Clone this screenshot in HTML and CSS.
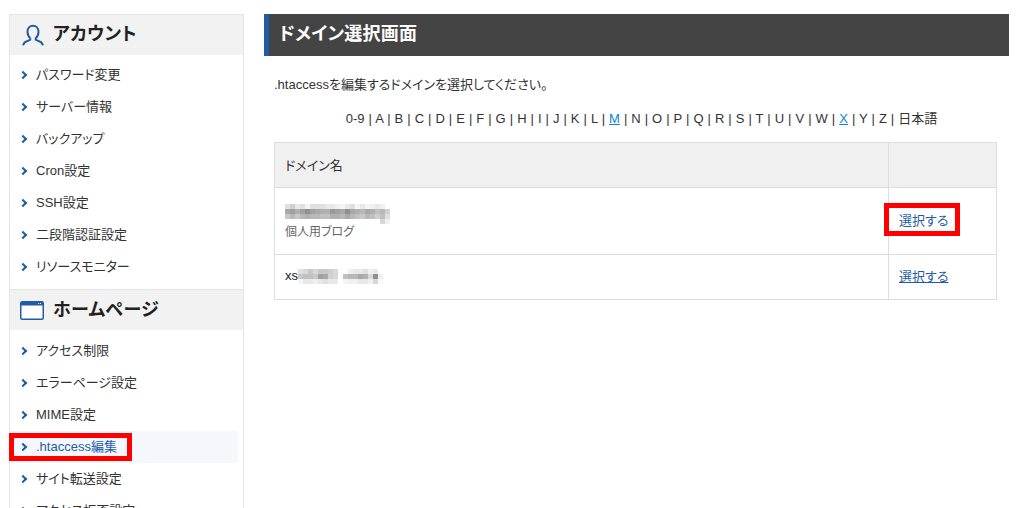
FILE: index.html
```html
<!DOCTYPE html>
<html lang="ja">
<head>
    <meta charset="UTF-8">
    <title>ドメイン選択画面</title>
    <link rel="stylesheet" href="styles.css">
</head>
<body>
    <div class="page">
        <div class="sidebar">
            <div class="side-head">
                <svg class="head-icon" width="22" height="22" viewBox="0 0 24 24" fill="none" stroke="#1f5ca8" stroke-width="2.200">
                    <path d="M9 15.500C6.800 13.500 6 11.300 6 8.500C6 4.500 8.500 2 12 2C15.500 2 18 4.500 18 8.500C18 11.300 17.200 13.500 15 15.500L15 17L21 20L23 23M9 15.500L9 17L3 20L1 23"/>
                </svg>
                <span>アカウント</span>
            </div>
            <ul class="side-list">
                <li>パスワード変更</li>
                <li>サーバー情報</li>
                <li>バックアップ</li>
                <li>Cron設定</li>
                <li>SSH設定</li>
                <li>二段階認証設定</li>
                <li>リソースモニター</li>
            </ul>
            <div class="side-head second">
                <svg class="head-icon" width="24" height="19" viewBox="0 0 24 19">
                    <rect x="0.750" y="0.750" width="22.500" height="17.500" rx="1.500" fill="#fff" stroke="#1f5ca8" stroke-width="1.500"/>
                    <rect x="1" y="1" width="22" height="3.500" fill="#1f5ca8"/>
                    <rect x="18" y="2" width="1" height="1" fill="#fff"/>
                    <rect x="20" y="2" width="1" height="1" fill="#fff"/>
                </svg>
                <span>ホームページ</span>
            </div>
            <ul class="side-list home-list">
                <li>アクセス制限</li>
                <li>エラーページ設定</li>
                <li>MIME設定</li>
                <li class="current">.htaccess編集<span class="mark mark-side"></span></li>
                <li>サイト転送設定</li>
                <li>アクセス拒否設定</li>
            </ul>
        </div>

        <div class="main">
            <h1 class="title">ドメイン選択画面</h1>
            <p class="lead">.htaccessを編集するドメインを選択してください。</p>
            <p class="index">0-9 | A | B | C | D | E | F | G | H | I | J | K | L | <a href="#">M</a> | N | O | P | Q | R | S | T | U | V | W | <a href="#">X</a> | Y | Z | 日本語</p>
            <table class="domains">
                <tr>
                    <th>ドメイン名</th>
                    <th class="action"></th>
                </tr>
                <tr class="row-first">
                    <td>
                        <div class="blur blur-one"></div>
                        <div class="note">個人用ブログ</div>
                    </td>
                    <td class="action"><span class="select">選択する<span class="mark mark-table"></span></span></td>
                </tr>
                <tr class="row-second">
                    <td><span class="host">xs</span><span class="blur blur-two"></span></td>
                    <td class="action"><a class="select" href="#">選択する</a></td>
                </tr>
            </table>
        </div>
    </div>
</body>
</html>
```

FILE: styles.css
```css
html, body {
    margin: 0;
    height: 508px;
    overflow: hidden;
}
body {
    font-family: "Liberation Sans", "Noto Sans CJK JP", sans-serif;
    font-feature-settings: "palt";
    font-size: 13px;
    color: #333;
    background: #fff;
}
.page {
    display: flex;
    align-items: flex-start;
    gap: 20px;
    padding: 14px 13px 0 9px;
}
.sidebar {
    width: 233px;
    flex-shrink: 0;
    border: 1px solid #e5e5e5;
}
.side-head {
    display: flex;
    align-items: center;
    height: 40px;
    padding-left: 12px;
    background: #f2f2f2;
    font-size: 18px;
    font-weight: bold;
    line-height: 36px;
    letter-spacing: 0.400px;
    color: #222;
}
.side-head span {
    margin-bottom: 3px;
}
.side-head.second {
    border-top: 1px solid #e5e5e5;
    padding-left: 10px;
}
.side-head.second span {
    margin-bottom: 1px;
}
.head-icon {
    margin-right: 9px;
}
.side-list {
    list-style: none;
    margin: 0;
    padding: 4px 5px 6px 0;
}
.home-list {
    padding-top: 5px;
}
.side-list li {
    position: relative;
    height: 32px;
    line-height: 32px;
    padding-left: 26px;
    color: #333;
}
.side-list li::before {
    content: "";
    position: absolute;
    left: 10px;
    top: 13px;
    width: 4px;
    height: 4px;
    border-top: 2px solid #1f5ca8;
    border-right: 2px solid #1f5ca8;
    transform: rotate(45deg);
}
.side-list li.current {
    background: #f4f8fd;
    color: #1f5ca8;
}
.mark {
    position: absolute;
    border: 5px solid #f00;
}
.mark-side {
    left: -1px;
    top: 2px;
    width: 113px;
    height: 18px;
}
.main {
    flex: 1;
}
.title {
    margin: 0;
    height: 42px;
    line-height: 41px;
    padding-left: 10px;
    background: #444;
    border-left: 5px solid #1f5ca8;
    color: #fff;
    font-size: 18px;
    font-weight: bold;
    letter-spacing: 0.200px;
}
.lead {
    margin: 21px 0 0 10px;
    line-height: 16px;
}
.index {
    margin: 18px 0 0 22px;
    width: 711px;
    line-height: 16px;
    text-align: center;
    word-spacing: 0.400px;
}
.index a {
    color: #0b85d1;
}
.domains {
    margin: 15px 0 0 10px;
    width: 723px;
    border-collapse: collapse;
    table-layout: fixed;
}
.domains th, .domains td {
    box-sizing: border-box;
    border: 1px solid #ddd;
    padding: 0 0 0 10px;
    text-align: left;
    font-weight: normal;
}
.domains th {
    height: 45px;
    padding-bottom: 2px;
    background: #f0f0f0;
}
.domains .action {
    width: 108px;
}
.row-first td {
    height: 67px;
    padding-top: 1px;
}
.row-second td {
    height: 45px;
    padding-bottom: 3px;
}
.domains .row-first .action {
    padding-bottom: 4px;
}
.note {
    line-height: 16px;
    font-size: 12px;
    color: #666;
}
.select {
    position: relative;
    color: #1f5ca8;
}
.mark-table {
    left: -15px;
    top: -10px;
    width: 66px;
    height: 23px;
}
.host {
    color: #222;
}
.blur {
    display: block;
    background-repeat: no-repeat;
}
.blur-one {
    width: 105px;
    height: 20px;
    background-image:
        linear-gradient(90deg, #e0e0e0 0 5px, #d0d0d0 5px 10px, #e8e8e8 10px 15px, #e0e0e0 15px 20px, #f5f5f5 20px 25px, #e0e0e0 25px 40px, #e8e8e8 40px 50px, #f0f0f0 50px 55px, #f5f5f5 55px 60px, #e8e8e8 60px 65px, #e0e0e0 65px 70px, #f5f5f5 70px 75px, #e8e8e8 75px 80px, #f5f5f5 80px 85px, #f0f0f0 85px 90px, #e8e8e8 90px 95px, #f0f0f0 95px 100px, #fff 100px 105px),
        linear-gradient(90deg, #a8a8a8 0 5px, #a0a0a0 5px 10px, #b0b0b0 10px 15px, #a0a0a0 15px 20px, #909090 20px 25px, #a0a0a0 25px 30px, #a8a8a8 30px 35px, #b0b0b0 35px 45px, #989898 45px 50px, #a0a0a0 50px 55px, #a8a8a8 55px 60px, #909090 60px 65px, #a8a8a8 65px 70px, #b0b0b0 70px 75px, #b8b8b8 75px 80px, #a8a8a8 80px 85px, #b0b0b0 85px 90px, #c0c0c0 90px 95px, #b8b8b8 95px 100px, #d0d0d0 100px 105px),
        linear-gradient(90deg, #c8c8c8 0 5px, #b8b8b8 5px 10px, #c8c8c8 10px 15px, #b8b8b8 15px 20px, #b0b0b0 20px 25px, #b8b8b8 25px 35px, #c0c0c0 35px 45px, #b0b0b0 45px 55px, #b8b8b8 55px 60px, #a8a8a8 60px 65px, #b8b8b8 65px 70px, #c0c0c0 70px 75px, #c8c8c8 75px 80px, #b8b8b8 80px 85px, #c0c0c0 85px 90px, #d0d0d0 90px 95px, #c0c0c0 95px 100px, #e0e0e0 100px 105px),
        linear-gradient(90deg, #d8d8d8 0 5px, #f0f0f0 5px 10px);
    background-size: 105px 5px, 105px 5px, 105px 5px, 10px 5px;
    background-position: 0 0, 0 5px, 0 10px, 95px 15px;
}
.blur-two {
    display: inline-block;
    vertical-align: -4px;
    width: 85px;
    height: 15px;
    background-image:
        linear-gradient(90deg, #e0e0e0 0 5px, #d8d8d8 5px 10px, #c8c8c8 10px 15px, #d8d8d8 15px 20px, #c8c8c8 20px 30px, #d0d0d0 30px 35px, #d8d8d8 35px 40px, #fff 40px 50px, #f0f0f0 50px 55px, #e8e8e8 55px 65px, #e0e0e0 65px 70px, #f0f0f0 70px 75px, #e8e8e8 75px 80px, #fff 80px 85px),
        linear-gradient(90deg, #c8c8c8 0 5px, #c0c0c0 5px 15px, #c8c8c8 15px 20px, #a0a0a0 20px 25px, #a8a8a8 25px 30px, #d0d0d0 30px 35px, #d8d8d8 35px 40px, #fff 40px 45px, #c0c0c0 45px 50px, #b8b8b8 50px 60px, #a8a8a8 60px 65px, #b0b0b0 65px 70px, #d8d8d8 70px 75px, #909090 75px 80px, #f0f0f0 80px 85px),
        linear-gradient(90deg, #f5f5f5 0 5px, #e8e8e8 5px 15px, #f0f0f0 15px 20px, #e8e8e8 20px 25px, #e0e0e0 25px 30px, #e8e8e8 30px 40px, #fff 40px 45px, #f5f5f5 45px 50px, #f0f0f0 50px 60px, #e8e8e8 60px 70px, #f0f0f0 70px 75px, #d8d8d8 75px 80px, #fafafa 80px 85px);
    background-size: 85px 5px;
    background-position: 0 0, 0 5px, 0 10px;
}
```
